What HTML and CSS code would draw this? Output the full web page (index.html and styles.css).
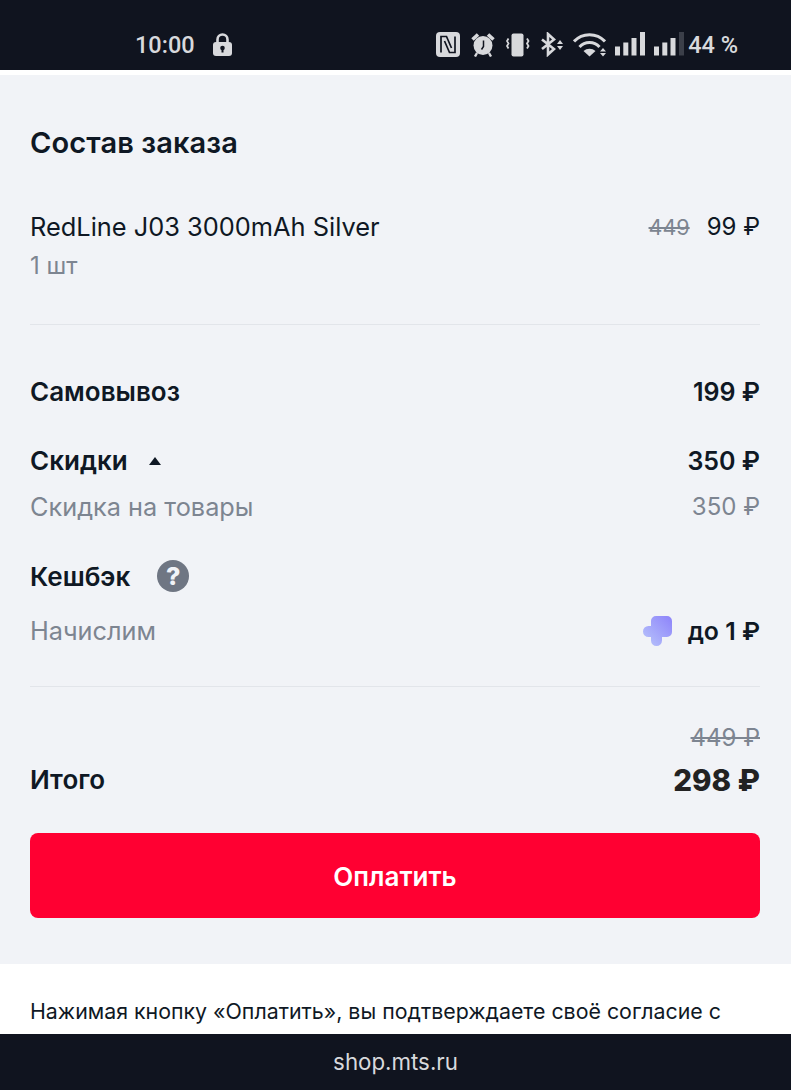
FILE: index.html
```html
<!DOCTYPE html>
<html lang="ru">
  <head>
    <meta charset="UTF-8" />
    <title>Состав заказа</title>
    <link rel="stylesheet" href="styles.css">
  </head>
  <body>
    <div class="status">
      <div class="status-left">
        <span class="time">10:00</span>
        <svg width="19" height="23" viewBox="0 0 19 23"><path d="M4.500 10V6.500a5 5 0 0 1 10 0V10" fill="none" stroke="#d8d9dc" stroke-width="2.600"/><rect x="0" y="9" width="19" height="14" rx="3" fill="#d8d9dc"/><circle cx="9.500" cy="15" r="2.300" fill="#10141f"/><rect x="8.500" y="15" width="2" height="4.500" fill="#10141f"/></svg>
      </div>
      <div class="status-right">
        <svg width="26" height="25" viewBox="0 0 26 25"><rect x="0" y="0" width="24" height="25" rx="4" fill="#d8d9dc"/><path d="M5 20.500V4.500h5.500L15.500 16M19 4.500V20.500h-5.500L8.500 9" fill="none" stroke="#10141f" stroke-width="1.700"/></svg>
        <svg width="26" height="25" viewBox="0 0 26 25"><circle cx="12" cy="13.500" r="9.500" fill="#d8d9dc"/><path d="M12.500 8.500v6l-2 3" fill="none" stroke="#10141f" stroke-width="1.500"/><path d="M1.500 7.500l5.500-5M22.500 7.500l-5.500-5" stroke="#d8d9dc" stroke-width="3.600"/><path d="M6 21l-2 3.500M18 21l2 3.500" stroke="#d8d9dc" stroke-width="2.400"/></svg>
        <svg width="26" height="25" viewBox="0 0 26 25"><rect x="5.500" y="1.500" width="12" height="23" rx="2" fill="#d8d9dc"/><path d="M2.500 6.500l-1.500 2.500 1.500 2.500-1.500 2.500 1.500 2.500M21 6.500l1.500 2.500-1.500 2.500 1.500 2.500-1.500 2.500" fill="none" stroke="#d8d9dc" stroke-width="1.800"/></svg>
        <svg width="23" height="25" viewBox="0 0 23 25"><path d="M1 7.500l12 9.500-6 5.500V2l6 5.500L1 17" fill="none" stroke="#d8d9dc" stroke-width="2.600"/><path d="M16 12l3-4 3 4zM16 14l3 4 3-4z" fill="#d8d9dc"/></svg>
        <svg width="33" height="25" viewBox="0 0 33 25"><path d="M1 9.500a21 21 0 0 1 31 0M6.500 15a13.500 13.500 0 0 1 20 0" fill="none" stroke="#d8d9dc" stroke-width="3"/><path d="M10.500 19a9 9 0 0 1 12 0l-6 5.500z" fill="#d8d9dc"/><path d="M27 19.500l3-3.500 3 3.500zM27 21l3 3.500 3-3.500z" fill="#d8d9dc"/></svg>
        <svg width="30" height="25" viewBox="0 0 30 25"><path d="M0 14.500h5v9H0zM8.300 10.500h5v13h-5zM16.500 6h5v17.500h-5zM25 0h5v23.500h-5z" fill="#d8d9dc"/></svg>
        <svg width="30" height="25" viewBox="0 0 30 25"><path d="M0 14.500h5v9H0zM8.300 10.500h5v13h-5zM16.500 6h5v17.500h-5z" fill="#d8d9dc"/><path d="M25 0h5v23.500h-5z" fill="#3b3f49"/></svg>
        <span class="battery">44 %</span>
      </div>
    </div>
    <div class="card">
      <h1>Состав заказа</h1>
      <div class="row item-row">
        <span class="item-name">RedLine J03 3000mAh Silver</span>
        <span class="prices"><s class="old">449</s><span>99 ₽</span></span>
      </div>
      <div class="qty">1 шт</div>
      <hr />
      <div class="row pickup"><b>Самовывоз</b><b class="amount">199 ₽</b></div>
      <div class="row discounts">
        <b class="with-arrow">Скидки<i class="arrow"></i></b><b class="amount">350 ₽</b>
      </div>
      <div class="row muted"><span class="discount-name">Скидка на товары</span><span>350 ₽</span></div>
      <div class="cashback"><b>Кешбэк</b><span class="help">?</span></div>
      <div class="row accrue">
        <span class="muted-text">Начислим</span>
        <b class="with-logo">
          <svg width="30" height="30" viewBox="0 0 30 30">
            <defs>
              <linearGradient id="cb" x1="0" y1="1" x2="1" y2="0">
                <stop offset="0" stop-color="#b9c6fb" />
                <stop offset="1" stop-color="#8d83fa" />
              </linearGradient>
            </defs>
            <path d="M13 0h11a5 5 0 0 1 5 5v11a5 5 0 0 1-5 5h-5v3.500a5.500 5.500 0 0 1-11 0V21H5.500a5.500 5.500 0 0 1 0-11H8V5a5 5 0 0 1 5-5z" fill="url(#cb)"/>
          </svg>
          <span class="accrue-sum">до 1 ₽</span>
        </b>
      </div>
      <hr class="second" />
      <div class="total-old"><s>449 ₽</s></div>
      <div class="row total"><b>Итого</b><b class="sum">298 ₽</b></div>
      <button class="pay">Оплатить</button>
    </div>
    <p class="agree">Нажимая кнопку «Оплатить», вы подтверждаете своё согласие с</p>
    <div class="address">shop.mts.ru</div>
  </body>
</html>
```

FILE: styles.css
```css
* {
  padding: 0;
  margin: 0;
  box-sizing: border-box;
}

html,
body {
  height: 1090px;
  overflow: hidden;
}

body {
  display: flex;
  flex-direction: column;
  background: #fff;
  color: #0f1824;
  font-family: "Inter", "Liberation Sans", sans-serif;
  font-size: 24px;
}

.status {
  height: 70px;
  flex: none;
  padding: 19px 53px 0 135px;
  display: flex;
  justify-content: space-between;
  align-items: center;
  background: #10141f;
  color: #d8d9dc;
  font-family: "Roboto", sans-serif;
  font-size: 23.500px;
  font-weight: 500;
}

.status-left,
.status-right {
  display: flex;
  align-items: center;
}

.status-left {
  gap: 18px;
}

.status-right {
  gap: 9px;
}

.battery {
  margin-left: -5px;
}

.card {
  flex: none;
  height: 889px;
  margin-top: 5px;
  padding: 50px 31px 0 30px;
  background: #f1f3f7;
}

h1 {
  font-size: 29px;
  line-height: 36px;
  font-weight: 600;
  letter-spacing: 0.1px;
}

.row {
  display: flex;
  justify-content: space-between;
  align-items: center;
}

b {
  font-weight: 600;
  font-size: 26px;
}

.amount {
  font-size: 25px;
}

.item-row {
  margin-top: 50px;
  line-height: 32px;
}

.item-name {
  font-size: 25.400px;
}

.prices {
  display: flex;
  gap: 17px;
}

.old {
  color: #7d8591;
  font-size: 21.500px;
}

.qty {
  margin-top: 7px;
  line-height: 32px;
  color: #7d8591;
}

hr {
  margin-top: 42px;
  border: 0;
  border-top: 1px solid #e2e5ea;
}

.pickup {
  margin-top: 49px;
  line-height: 36px;
}

.discounts {
  margin-top: 33px;
  line-height: 36px;
}

.with-arrow {
  display: flex;
  align-items: center;
  gap: 21px;
}

.arrow {
  width: 0;
  height: 0;
  border-left: 6.500px solid transparent;
  border-right: 6.500px solid transparent;
  border-bottom: 8px solid #0f1824;
}

.muted {
  margin-top: 12px;
  line-height: 32px;
  color: #7d8591;
}

.discount-name,
.muted-text {
  font-size: 25.300px;
}

.muted-text {
  color: #7d8591;
}

.cashback {
  margin-top: 35px;
  display: flex;
  align-items: center;
  gap: 27px;
  height: 36px;
}

.help {
  width: 32px;
  height: 32px;
  border-radius: 50%;
  background: #6f7683;
  color: #f1f3f7;
  font-weight: 800;
  font-size: 25px;
  line-height: 32px;
  text-align: center;
}

.accrue {
  margin-top: 19px;
  line-height: 36px;
}

.with-logo {
  display: flex;
  align-items: center;
  gap: 15px;
}

.accrue-sum {
  font-size: 24.800px;
}

hr.second {
  margin-top: 37px;
}

.total-old {
  margin-top: 35px;
  line-height: 32px;
  text-align: right;
  color: #7d8591;
}

.total {
  margin-top: 6px;
  line-height: 40px;
  color: #222;
}

.total b:first-child {
  color: #0f1824;
}

.sum {
  font-size: 29.500px;
  font-weight: 800;
}

.pay {
  display: block;
  width: 100%;
  height: 85px;
  margin-top: 33px;
  padding-top: 2px;
  border: 0;
  border-radius: 8px;
  background: #ff0032;
  color: #fff;
  font-family: inherit;
  font-size: 26px;
  font-weight: 600;
}

.agree {
  flex: 1;
  padding: 32px 30px 0;
  font-size: 21.350px;
  line-height: 30px;
  overflow: hidden;
}

.address {
  flex: none;
  height: 56px;
  background: #10141f;
  color: #d8d9dc;
  font-size: 22.300px;
  line-height: 56px;
  text-align: center;
}
```
